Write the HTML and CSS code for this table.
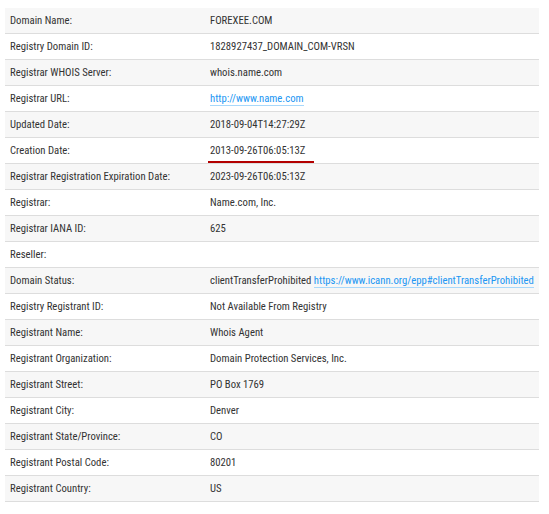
FILE: index.html
```html
<!DOCTYPE html>
<html>
<head>
<meta charset="utf-8">
<link rel="stylesheet" href="styles.css">
</head>
<body>
<table class="whois">
<colgroup><col class="c1"><col></colgroup>
<tr><td>Domain Name:</td><td>FOREXEE.COM</td></tr>
<tr><td>Registry Domain ID:</td><td>1828927437_DOMAIN_COM-VRSN</td></tr>
<tr><td>Registrar WHOIS Server:</td><td>whois.name.com</td></tr>
<tr><td>Registrar URL:</td><td><a href="#">http://www.name.com</a></td></tr>
<tr><td>Updated Date:</td><td>2018-09-04T14:27:29Z</td></tr>
<tr><td>Creation Date:</td><td><span class="mark">2013-09-26T06:05:13Z</span></td></tr>
<tr><td>Registrar Registration Expiration Date:</td><td>2023-09-26T06:05:13Z</td></tr>
<tr><td>Registrar:</td><td>Name.com, Inc.</td></tr>
<tr><td>Registrar IANA ID:</td><td>625</td></tr>
<tr><td>Reseller:</td><td></td></tr>
<tr><td>Domain Status:</td><td>clientTransferProhibited <a href="#">https://www.icann.org/epp#clientTransferProhibited</a></td></tr>
<tr><td>Registry Registrant ID:</td><td>Not Available From Registry</td></tr>
<tr><td>Registrant Name:</td><td>Whois Agent</td></tr>
<tr><td>Registrant Organization:</td><td>Domain Protection Services, Inc.</td></tr>
<tr><td>Registrant Street:</td><td>PO Box 1769</td></tr>
<tr><td>Registrant City:</td><td>Denver</td></tr>
<tr><td>Registrant State/Province:</td><td>CO</td></tr>
<tr><td>Registrant Postal Code:</td><td>80201</td></tr>
<tr><td>Registrant Country:</td><td>US</td></tr>
</table>
</body>
</html>
```
FILE: styles.css
```css
html, body { margin: 0; padding: 0; background: #fff; }
body { padding: 8px 10px 0 5px; font-family: Roboto, sans-serif; font-stretch: 80%; font-size: 10.7px; color: #333; }
.whois { width: 534px; border-collapse: collapse; table-layout: fixed; }
.whois .c1 { width: 200px; }
.whois td { height: 25px; padding: 0 5px; border-bottom: 1px solid #ddd; vertical-align: middle; white-space: nowrap; }
.whois tr:nth-child(odd) td { background: #f7f7f7; }
.whois a { color: #2196f3; text-decoration: none; border-bottom: 1px solid #a8d8fb; }
.mark { display: inline-block; position: relative; }
.mark::after { content: ""; position: absolute; left: -2px; right: -9px; bottom: -6px; height: 2px; background: #b30000; }
```
